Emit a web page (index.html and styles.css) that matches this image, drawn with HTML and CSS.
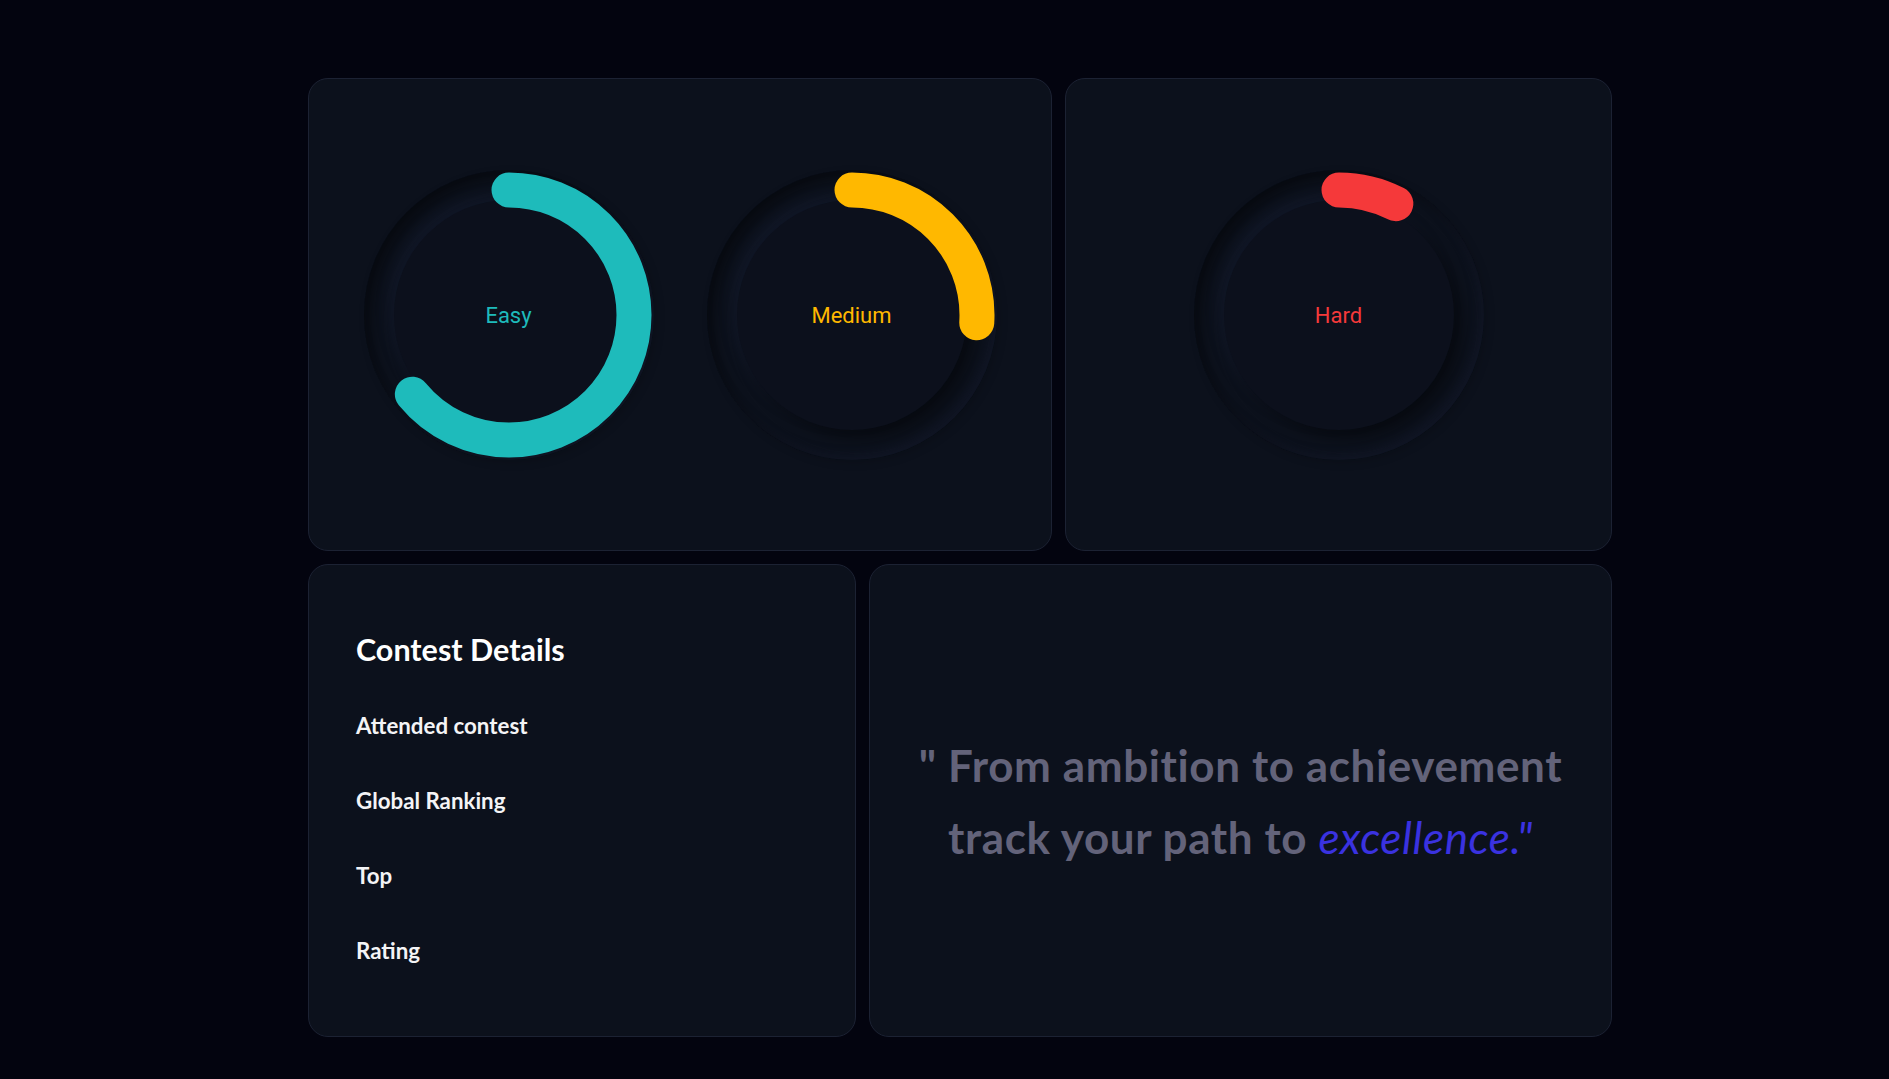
FILE: index.html
```html
<!DOCTYPE html>
<html lang="en">
<head>
<meta charset="utf-8">
<title>Dashboard</title>
<link rel="stylesheet" href="styles.css">
</head>
<body>
<main class="board">
  <section class="row">
    <div class="card card-wide rings">
      <div class="ring">
        <div class="ring-inner"><span class="ring-label easy">Easy</span></div>
        <svg class="ring-arc" viewBox="0 0 290 290" width="290" height="290">
          <circle cx="145" cy="145" r="125" fill="none" stroke="#1ebbbb" stroke-width="35" stroke-linecap="round" stroke-dasharray="503 1000" transform="rotate(-90 145 145)"/>
        </svg>
      </div>
      <div class="ring">
        <div class="ring-inner"><span class="ring-label medium">Medium</span></div>
        <svg class="ring-arc" viewBox="0 0 290 290" width="290" height="290">
          <circle cx="145" cy="145" r="125" fill="none" stroke="#ffb800" stroke-width="35" stroke-linecap="round" stroke-dasharray="204 1000" transform="rotate(-90 145 145)"/>
        </svg>
      </div>
    </div>
    <div class="card card-narrow rings">
      <div class="ring">
        <div class="ring-inner"><span class="ring-label hard">Hard</span></div>
        <svg class="ring-arc" viewBox="0 0 290 290" width="290" height="290">
          <circle cx="145" cy="145" r="125" fill="none" stroke="#f5393a" stroke-width="35" stroke-linecap="round" stroke-dasharray="59 1000" transform="rotate(-90 145 145)"/>
        </svg>
      </div>
    </div>
  </section>
  <section class="row">
    <div class="card card-narrow2 contest">
      <h2 class="contest-title">Contest Details</h2>
      <ul class="contest-list">
        <li>Attended contest</li>
        <li>Global Ranking</li>
        <li>Top</li>
        <li>Rating</li>
      </ul>
    </div>
    <div class="card card-wide2 quote">
      <p class="quote-text">" From ambition to achievement<br>track your path to <span class="hl">excellence."</span></p>
    </div>
  </section>
</main>
</body>
</html>
```
FILE: styles.css
```css
* { box-sizing: border-box; }

html, body {
  margin: 0;
  padding: 0;
  background: #03040f;
}

body {
  font-family: "Lato", "Liberation Sans", sans-serif;
  color: #ffffff;
}

.board {
  display: flex;
  flex-direction: column;
  gap: 13px;
  padding: 78px 0 0 308px;
}

.row {
  display: flex;
  gap: 13px;
}

.card {
  background: #0c111c;
  border: 1px solid #1c2233;
  border-radius: 20px;
  height: 473px;
}

.card-wide { width: 744px; }
.card-narrow { width: 547px; }
.card-narrow2 { width: 548px; }
.card-wide2 { width: 743px; }

.rings {
  display: flex;
  align-items: center;
  justify-content: center;
  gap: 53px;
}

.ring {
  position: relative;
  width: 290px;
  height: 290px;
  border-radius: 50%;
  background: #0c111c;
  box-shadow:
    inset 7px 7px 12px rgba(0, 0, 0, 0.4),
    inset -5px -5px 10px rgba(24, 31, 50, 0.4),
    3px 3px 8px rgba(0, 0, 0, 0.15);
  display: flex;
  align-items: center;
  justify-content: center;
  flex: none;
}

.ring-inner {
  width: 230px;
  height: 230px;
  border-radius: 50%;
  background: #0c101c;
  box-shadow:
    8px 8px 14px rgba(0, 0, 0, 0.4),
    -6px -6px 12px rgba(26, 33, 54, 0.4);
  display: flex;
  align-items: center;
  justify-content: center;
  padding-top: 2px;
}

.ring-arc {
  position: absolute;
  left: 0;
  top: 0;
}

.ring-label {
  font-family: "Roboto", "Liberation Sans", sans-serif;
  font-size: 22px;
  font-weight: 400;
  line-height: 1;
}

.easy { color: #1ebbbb; }
.medium { color: #ffb800; }
.hard { color: #f5393a; }

.contest {
  padding: 69px 47px 0 47px;
}

.contest-title {
  margin: 0;
  font-size: 30.5px;
  line-height: 30.5px;
  font-weight: 700;
  color: #ffffff;
}

.contest-list {
  list-style: none;
  margin: 50px 0 0 0;
  padding: 0;
  display: flex;
  flex-direction: column;
  gap: 53px;
}

.contest-list li {
  font-size: 22.3px;
  line-height: 22px;
  font-weight: 700;
  color: #f4f4f6;
}

.quote {
  display: flex;
  align-items: center;
  justify-content: center;
  padding: 0 10px;
}

.quote-text {
  margin: 0;
  text-align: center;
  font-size: 44px;
  line-height: 72px;
  font-weight: 700;
  letter-spacing: 0.6px;
  color: #63637a;
  white-space: nowrap;
}

.hl {
  font-style: italic;
  font-weight: 400;
  color: #3a32e0;
}
```
